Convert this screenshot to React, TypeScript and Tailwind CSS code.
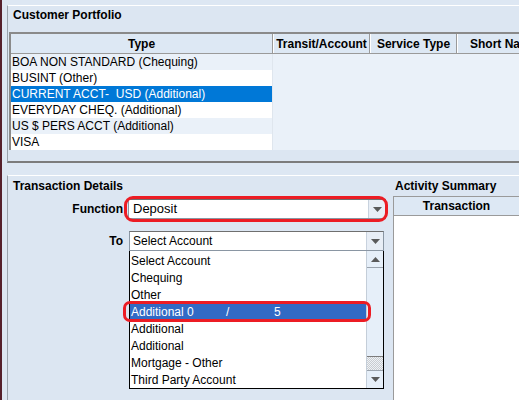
import React from "react"

const rows = [
  { label: "BOA NON STANDARD (Chequing)", white: false },
  { label: "BUSINT (Other)", white: true },
  { label: "CURRENT ACCT-  USD (Additional)", white: false, selected: true },
  { label: "EVERYDAY CHEQ. (Additional)", white: true },
  { label: "US $ PERS ACCT (Additional)", white: false },
  { label: "VISA", white: true },
]

const options = ["Select Account", "Chequing", "Other", "HIGHLIGHT", "Additional", "Additional", "Mortgage - Other", "Third Party Account"]

function Arrow({ up = false }: { up?: boolean }) {
  return (
    <svg width="9" height="5" viewBox="0 0 9 5">
      <path d={up ? "M0 5 L4.5 0 L9 5 Z" : "M0 0 L9 0 L4.5 5 Z"} fill="#5a5a5a" />
    </svg>
  )
}

function DropButton() {
  return (
    <div className="w-[17px] h-full flex items-center justify-center bg-[#e8eef6] border-l border-[#c8d2de] shrink-0">
      <Arrow />
    </div>
  )
}

export default function App() {
  return (
    <div
      className="w-[519px] h-[400px] overflow-hidden flex bg-[#dde7f3] text-[12px] leading-[14px] text-black"
      style={{ fontFamily: '"Liberation Sans", Arial, sans-serif' }}
    >
      <div className="w-[2px] shrink-0 bg-[#55202c]" />
      <div className="flex-1 flex flex-col pt-[5px] pl-[5px] min-w-0">
        {/* Customer Portfolio */}
        <div className="h-[158px] shrink-0 bg-[#dce6f2] border-t border-white border-l border-l-[#9aa3ad] border-b-2 border-b-[#7c7c7c] flex flex-col">
          <div className="h-[26px] pl-[5px] pt-[2px] font-bold">Customer Portfolio</div>
          <div className="ml-[1px] h-[118px] bg-[#eaf1f9] border-t-2 border-l-2 border-[#8a8a8a] flex flex-col overflow-hidden">
            <div className="h-[20px] flex border-b border-[#9a9a9a] bg-[#dde8f4] font-bold shrink-0">
              <div className="w-[262px] shrink-0 flex items-center justify-center border-r border-[#9a9a9a]">Type</div>
              <div className="w-[97px] shrink-0 flex items-center justify-center border-x border-[#9a9a9a] border-l-white">Transit/Account</div>
              <div className="w-[87px] shrink-0 flex items-center justify-center border-x border-[#9a9a9a] border-l-white">Service Type</div>
              <div className="flex-1 min-w-0 overflow-hidden flex items-center pl-[12px] border-l border-white whitespace-nowrap">Short Name</div>
            </div>
            {rows.map((r, i) => (
              <div
                key={i}
                className={`h-[16px] w-[262px] pl-[1px] flex items-center whitespace-pre border-r border-[#dfe6ee] ${
                  r.selected ? "bg-[#0078d7] text-white" : r.white ? "bg-white" : ""
                }`}
              >
                {r.label}
              </div>
            ))}
          </div>
        </div>

        <div className="h-[12px] shrink-0" />

        {/* Transaction panel */}
        <div className="flex-1 bg-[#dce6f2] border-t border-white border-l border-l-[#9aa3ad] flex">
          <div className="w-[385px] shrink-0 flex flex-col relative">
            <div className="pl-[5px] pt-[3px] h-[17px] font-bold">Transaction Details</div>
            <div className="mt-[6px] flex items-center h-[20px]">
              <div className="w-[115px] text-right font-bold">Function</div>
              <div className="ml-[5px] w-[258px] h-[20px] bg-white border border-[#8a96a3] border-t-[#6f6f6f] flex">
                <div className="flex-1 pl-[4px] flex items-center text-[13px]">Deposit</div>
                <DropButton />
              </div>
            </div>
            <div className="mt-[12px] flex items-center h-[20px]">
              <div className="w-[115px] text-right font-bold">To</div>
              <div className="ml-[6px] w-[255px] h-[20px] bg-white border border-[#8a96a3] border-t-[#6f6f6f] flex">
                <div className="flex-1 pl-[3px] flex items-center">Select Account</div>
                <DropButton />
              </div>
            </div>
            <div className="ml-[121px] w-[255px] h-[138px] bg-white border border-t-0 border-black flex">
              <div className="flex-1 flex flex-col pt-[1px]">
                {options.map((o, i) =>
                  o === "HIGHLIGHT" ? (
                    <div key={i} className="h-[17px] flex items-center bg-[#316ac5] text-white pl-[1px] whitespace-nowrap">
                      <span className="w-[95px]">Additional 0</span>
                      <span className="w-[48px]">/</span>
                      <span>5</span>
                    </div>
                  ) : (
                    <div key={i} className="h-[17px] flex items-center pl-[1px] whitespace-nowrap">
                      {o}
                    </div>
                  )
                )}
              </div>
              <div className="w-[17px] flex flex-col bg-[#e6eff9] border-l border-[#c4ced9]">
                <div className="h-[17px] flex items-center justify-center border-b border-[#9aa3ad]">
                  <Arrow up />
                </div>
                <div className="h-[89px] border-b border-[#7c7c7c]" />
                <div
                  className="h-[13px]"
                  style={{
                    backgroundImage:
                      "repeating-conic-gradient(#c9ccd0 0% 25%, #eef2f6 0% 50%)",
                    backgroundSize: "2px 2px",
                  }}
                />
                <div className="flex-1 flex items-center justify-center border-t border-[#9aa3ad]">
                  <Arrow />
                </div>
              </div>
            </div>

            {/* red highlight marks */}
            <div className="absolute left-[116px] top-[20px] w-[264px] h-[26px] border-[3px] border-[#ec1c24] rounded-[9px] pointer-events-none" />
            <div className="absolute left-[115px] top-[125px] w-[248px] h-[21px] border-[3px] border-[#ec1c24] rounded-[7px] pointer-events-none" />
          </div>

          {/* Activity Summary */}
          <div className="flex-1 flex flex-col min-w-0">
            <div className="pl-[2px] pt-[3px] h-[20px] font-bold whitespace-nowrap">Activity Summary</div>
            <div className="flex-1 bg-white border-t border-l border-[#9a9a9a] flex flex-col">
              <div className="h-[19px] bg-[#dde8f4] border-b border-[#9a9a9a] flex items-center justify-center font-bold">
                Transaction
              </div>
            </div>
          </div>
        </div>
      </div>
    </div>
  )
}
